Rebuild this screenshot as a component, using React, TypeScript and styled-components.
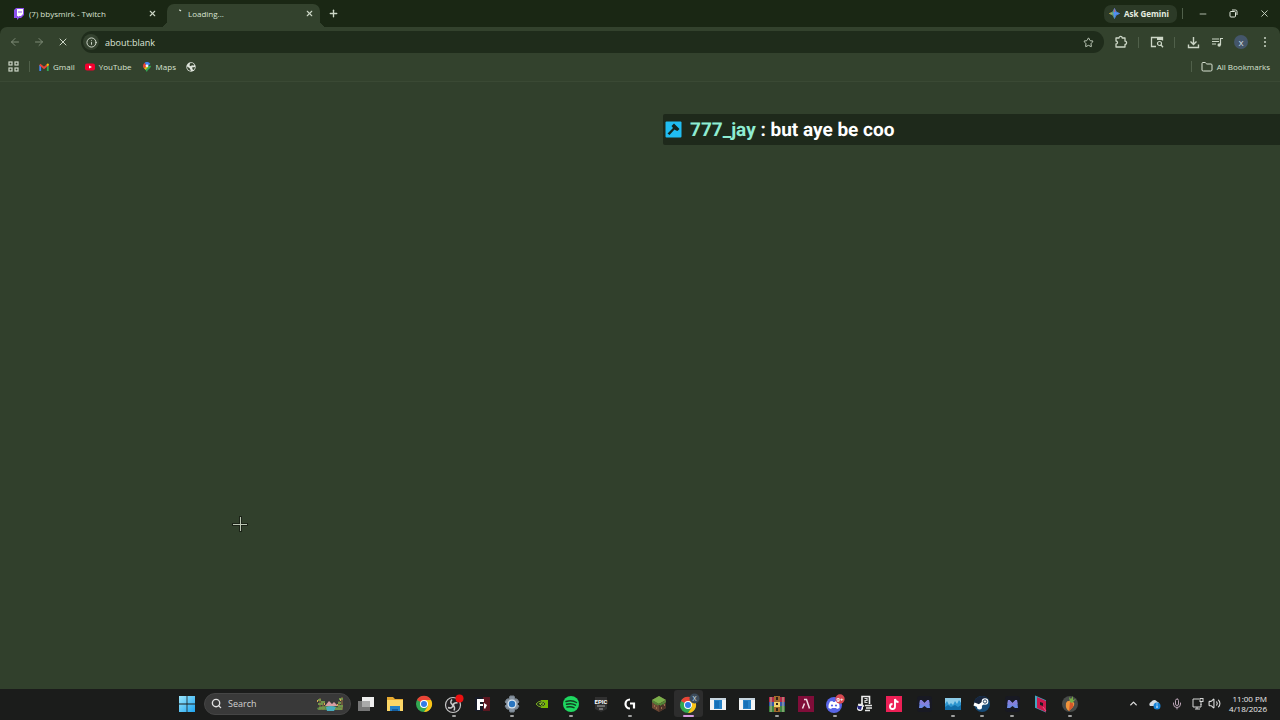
import React from "react";
import styled, { createGlobalStyle } from "styled-components";
import {
  ArrowLeft,
  ArrowRight,
  ChevronUp,
  Folder,
  Info,
  Mic,
  Minus,
  Plus,
  Search,
  Star,
  Volume2,
  X,
} from "lucide-react";

const ui = `"Open Sans", "Noto Sans", sans-serif`;
const c = {
  strip: "#1a2714",
  bar: "#33422d",
  page: "#31402c",
  field: "#1f2c1b",
  icon: "#ccd6c6",
  text: "#d9e2d3",
  dim: "#7e8b77",
  line: "#50604a",
  task: "#1b1c1b",
};

const Global = createGlobalStyle`
  * { box-sizing: border-box; }
  body { margin: 0; background: ${c.page}; font-family: ${ui}; font-size: 8px; color: ${c.text}; }
  button, input { font: inherit; color: inherit; border: 0; padding: 0; margin: 0; background: none; }
  svg { display: block; flex: none; }
  a { color: inherit; text-decoration: none; }
`;

const Screen = styled.div`
  display: flex;
  flex-direction: column;
  min-height: 100vh;
`;

const TabStrip = styled.header`
  display: flex;
  align-items: center;
  height: 27px;
  background: ${c.strip};
`;

const Tab = styled.div<{ $active?: boolean }>`
  position: relative;
  display: flex;
  align-items: center;
  align-self: stretch;
  gap: 4px;
  flex: 0 1 ${(p) => (p.$active ? 153 : 167)}px;
  margin-top: ${(p) => (p.$active ? 4 : 0)}px;
  padding: ${(p) => (p.$active ? "0 4px 4px 7px" : "0 8px 0 12px")};
  border-radius: 7px 7px 0 0;
  background: ${(p) => (p.$active ? c.bar : "transparent")};

  &::before,
  &::after {
    content: "";
    display: ${(p) => (p.$active ? "block" : "none")};
    position: absolute;
    bottom: 0;
    width: 7px;
    height: 7px;
  }
  &::before {
    right: 100%;
    background: radial-gradient(circle at 0 0, transparent 7px, ${c.bar} 7px);
  }
  &::after {
    left: 100%;
    background: radial-gradient(circle at 100% 0, transparent 7px, ${c.bar} 7px);
  }
`;

const TabTitle = styled.span`
  flex: 1;
  white-space: nowrap;
  overflow: hidden;
`;

const IconButton = styled.button<{ $w?: number; $dim?: boolean }>`
  display: flex;
  align-items: center;
  justify-content: center;
  flex: none;
  width: ${(p) => p.$w ?? 24}px;
  height: 24px;
  color: ${(p) => (p.$dim ? c.dim : c.icon)};
`;

const Spacer = styled.div`
  flex: 1;
`;

const Gemini = styled.button`
  display: flex;
  align-items: center;
  gap: 4px;
  height: 18px;
  padding: 0 8px 0 5px;
  border-radius: 7px;
  background: #2c3a27;
  font-weight: 700;
  color: #e6eee0;
`;

const Divider = styled.span<{ $gap?: number; $before?: number }>`
  flex: none;
  align-self: center;
  width: 1px;
  height: 11px;
  margin: 0 ${(p) => p.$gap ?? 6}px 0 ${(p) => p.$before ?? 5}px;
  background: ${c.line};
`;

const Toolbars = styled.div`
  background: ${c.strip};
`;

const Toolbar = styled.nav`
  display: flex;
  align-items: center;
  height: 30px;
  padding: 0 3px;
  border-radius: 7px 7px 0 0;
  background: ${c.bar};
`;

const Omnibox = styled.form`
  display: flex;
  align-items: center;
  flex: 1;
  gap: 6px;
  height: 22px;
  margin: 0 5px 0 6px;
  padding: 0 4px 0 2px;
  border-radius: 11px;
  background: ${c.field};
`;

const SiteInfo = styled.button`
  display: flex;
  align-items: center;
  justify-content: center;
  width: 16px;
  height: 16px;
  border-radius: 50%;
  background: #33412e;
  color: #dbe4d6;
`;

const Address = styled.input`
  flex: 1;
  min-width: 0;
  height: 20px;
  outline: none;
  font-size: 9px;
  color: #dfe7da;
`;

const Avatar = styled.span`
  display: flex;
  align-items: center;
  justify-content: center;
  width: 14px;
  height: 14px;
  border-radius: 50%;
  background: #44566a;
  color: #e4ecf4;
`;

const Bookmarks = styled.nav`
  display: flex;
  align-items: center;
  height: 25px;
  padding: 0 10px 5px 8px;
  background: ${c.bar};
  border-bottom: 1px solid #3a4934;
`;

const Bookmark = styled.a`
  display: flex;
  align-items: center;
  gap: 4px;
  margin-right: 10px;
  white-space: nowrap;

  &:last-child {
    margin-right: 0;
  }
`;

const Viewport = styled.main`
  position: relative;
  flex: 1;
  padding-top: 32px;
`;

const ChatLine = styled.div`
  display: flex;
  align-items: center;
  width: 617px;
  max-width: 100%;
  height: 31px;
  margin-left: auto;
  padding-left: 2px;
  border-radius: 2px 0 0 2px;
  background: #1e291b;
  font: 700 19px/30px Roboto, sans-serif;
  text-rendering: geometricPrecision;
  color: #fff;
  white-space: pre;
`;

const ChatName = styled.span`
  margin-left: 8px;
  color: #8eecd2;
`;

const Crosshair = styled.svg`
  position: absolute;
  left: 232px;
  top: 434px;
`;

const Taskbar = styled.footer`
  display: grid;
  grid-template-columns: minmax(0, 172fr) minmax(0, 913px) minmax(195px, 195fr);
  height: 31px;
  padding-bottom: 2px;
  background: ${c.task};
`;

const Apps = styled.div`
  grid-column: 2;
  display: flex;
  align-items: center;
`;

const SearchBox = styled.label`
  display: flex;
  align-items: center;
  gap: 6px;
  flex: none;
  width: 147px;
  height: 22px;
  margin-left: 2px;
  padding: 0 6px 0 6px;
  border: 1px solid #454545;
  border-radius: 11px;
  background: #393939;
  color: #e2e2e2;

  input {
    flex: 1;
    min-width: 0;
    font-size: 9px;
    outline: none;
  }
  input::placeholder {
    color: #d2d2d2;
    opacity: 1;
  }
`;

const AppButton = styled.button<{ $state?: "running" | "active" }>`
  position: relative;
  display: flex;
  align-items: center;
  justify-content: center;
  flex: 1;
  min-width: 0;
  height: 27px;
  border-radius: 3px;
  background: ${(p) => (p.$state === "active" ? "#2d2d2d" : "none")};

  &::after {
    content: "";
    display: ${(p) => (p.$state ? "block" : "none")};
    position: absolute;
    bottom: 0;
    width: ${(p) => (p.$state === "active" ? 11 : 4)}px;
    height: 2px;
    border-radius: 1px;
    background: ${(p) => (p.$state === "active" ? "#d59ae0" : "#a0a0a0")};
  }
`;

const Start = styled.button`
  display: flex;
  align-items: center;
  justify-content: center;
  flex: none;
  width: 30px;
  height: 27px;
`;

const Tray = styled.div`
  display: flex;
  align-items: center;
  justify-content: flex-end;
  padding-right: 13px;
  color: #dedede;
`;

const Clock = styled.time`
  width: 46px;
  line-height: 10px;
  text-align: right;
  color: #ececec;
  white-space: nowrap;
`;

const Svg = ({ s = 18, w, children }: { s?: number; w?: number; children: React.ReactNode }) => (
  <svg width={w ?? s} height={s} viewBox={`0 0 ${w ?? s} ${s}`} fill="none">
    {children}
  </svg>
);

const TwitchIcon = () => (
  <Svg s={13}>
    <path d="M4 1h8v7L9 11H7l-2 2v-2H2V3z" fill="#8d50ee" />
    <path d="M5 2h6v5L9 9H7L6 10V9H5z" fill="#fff" />
    <path d="M7 4v2M9 4v2" stroke="#8d50ee" />
  </Svg>
);

const GeminiIcon = () => (
  <Svg s={11}>
    <defs>
      <linearGradient id="gem" gradientUnits="userSpaceOnUse" x1="0" y1="6" x2="11" y2="5">
        <stop offset="0" stopColor="#f1bf45" />
        <stop offset=".35" stopColor="#5fa886" />
        <stop offset=".5" stopColor="#4f8df5" />
        <stop offset="1" stopColor="#5b94f8" />
      </linearGradient>
    </defs>
    <path d="M5.500 .5Q6.200 4.800 10.500 5.500Q6.200 6.200 5.500 10.500Q4.800 6.200 .5 5.500Q4.800 4.800 5.500 .5z" fill="url(#gem)" stroke="url(#gem)" strokeWidth=".8" />
    <path d="m5.500 .5-.6 3 .6.500.6-.5z" fill="#ea5545" />
  </Svg>
);

const PuzzleIcon = () => (
  <Svg s={14}>
    <path d="M2 3h3a1.600 1.600 0 0 1 3.200 0H11v3.200a1.600 1.600 0 0 1 0 3.200V12H2V9a1.500 1.500 0 0 0 0-3z" stroke={c.icon} strokeWidth="1.300" strokeLinejoin="round" />
  </Svg>
);

const LensIcon = () => (
  <Svg s={14}>
    <path d="M6 11.500H1.500v-9h11v3" stroke={c.icon} strokeWidth="1.300" />
    <path d="M7 3h5v2H7z" fill={c.icon} />
    <circle cx="9.500" cy="8.500" r="2" stroke={c.icon} strokeWidth="1.200" />
    <path d="m11 10 2 2.200" stroke={c.icon} strokeWidth="1.300" />
  </Svg>
);

const DownloadIcon = () => (
  <Svg s={13}>
    <path d="M6.500 1v7M3.500 5.500l3 3 3-3M1.500 8.500v3h10v-3" stroke={c.icon} strokeWidth="1.400" />
  </Svg>
);

const MediaIcon = () => (
  <Svg s={13}>
    <path d="M1 3h7M1 5.500h7M1 8h4M9.500 9V2.500H12" stroke={c.icon} strokeWidth="1.200" />
    <circle cx="8.200" cy="9" r="1.700" fill={c.icon} />
  </Svg>
);

const DotsIcon = () => (
  <Svg s={12}>
    {[2, 6, 10].map((y) => (
      <circle key={y} cx="6" cy={y} r="1" fill={c.icon} />
    ))}
  </Svg>
);

const RestoreIcon = () => (
  <Svg s={9}>
    <rect x="1" y="2.500" width="5.500" height="5.500" rx="1" stroke="#e0e8dc" />
    <path d="M3 1h3.500q1.500 0 1.500 1.500V6" stroke="#e0e8dc" />
  </Svg>
);

const GridIcon = () => (
  <Svg s={11}>
    {[1, 7].map((x) => [1, 7].map((y) => <rect key={`${x}${y}`} x={x} y={y} width="3" height="3" stroke={c.icon} strokeWidth="1.200" />))}
  </Svg>
);

const GmailIcon = () => (
  <Svg s={10}>
    <path d="M1.200 9V3" stroke="#4285f4" strokeWidth="1.800" />
    <path d="M8.800 9V3" stroke="#34a853" strokeWidth="1.800" />
    <path d="M.8 2.500 5 6l4.200-3.500" stroke="#ea4335" strokeWidth="2" />
    <path d="M8 3.500 9.500 2" stroke="#fbbc04" strokeWidth="1.800" />
  </Svg>
);

const YouTubeIcon = () => (
  <Svg s={10}>
    <rect y="1.500" width="10" height="7" rx="2" fill="#f4002f" />
    <path d="m4 3.500 3 1.500-3 1.500z" fill="#fff" />
  </Svg>
);

const MapsIcon = () => (
  <Svg s={10}>
    <path d="M5 10C4.500 7.500 1 6.500 1 3.800L5 4z" fill="#34a853" />
    <path d="M5 10c.5-2.500 4-3.500 4-6.200L5 4 2.500 6.500z" fill="#34a853" />
    <path d="M1 4A4 4 0 0 1 2.600.7L5 4 2.200 6.600Q1 5 1 4z" fill="#ea4335" />
    <path d="M2.600.7A4 4 0 0 1 8.400 2L5 4z" fill="#4285f4" />
    <path d="M2.200 6.600 5 4l1 1-2.600 2.800z" fill="#fbbc04" />
    <circle cx="5" cy="3.800" r="1.400" fill="#f3f3f3" />
  </Svg>
);

const GlobeIcon = () => (
  <Svg s={10}>
    <circle cx="5" cy="5" r="4.700" fill="#dfe5dc" />
    <path d="M1 4.500 3.500 6 5 8.800 3 8.500Q1 7 1 4.500zM4 1.200 6.500 1l2 2-1.500.8L6 3 5 4.200 3.500 3.500zM6 5.500l3-.5-.8 2.500L7 8z" fill="#34422e" />
  </Svg>
);

const GavelIcon = () => (
  <Svg s={17}>
    <rect x=".5" y=".5" width="16" height="16" rx="1" fill="#20bdf2" />
    <path d="M9 2.500 14.500 8 12.500 10 11 9.500 9.500 8.500 4.500 14 2.500 12.500 8 7 6.500 5z" fill="#14251f" />
  </Svg>
);

const StartIcon = () => (
  <Svg s={16}>
    <defs>
      <linearGradient id="win" gradientUnits="userSpaceOnUse" x1="0" y1="0" x2="16" y2="16">
        <stop stopColor="#9ce7fd" />
        <stop offset="1" stopColor="#1ea4f0" />
      </linearGradient>
    </defs>
    <path d="M0 0h7.600v7.600H0zM8.400 0H16v7.600H8.400zM0 8.400h7.600V16H0zM8.400 8.400H16V16H8.400z" fill="url(#win)" />
  </Svg>
);

const LandscapeIcon = () => (
  <Svg s={16} w={28}>
    <path d="M1 12Q7 9 14 10t13 1l-1 3H2z" fill="#5b8747" />
    <path d="M10 11q5-2 10 0l-2 4h-7z" fill="#48acbd" />
    <path d="m9 10 4-5 3 3 2-2 4 4z" fill="#d79da3" />
    <path d="M4 14V2M7 14V5M23 14V5M26 14V1" stroke="#9c7443" />
    <path d="M2 4h3M2 8h5M5 6h4M22 7h3M23 3h4M22 10h5M3 12h6M19 13h7" stroke="#72944a" strokeWidth="2" />
    <path d="M1 5h1M8 8h1M21 9h1M24 4h1" stroke="#dba952" strokeWidth="2" />
  </Svg>
);

const TaskViewIcon = () => (
  <Svg>
    <rect x="5" y="2" width="12" height="10" fill="#eee" />
    <rect x="1" y="6" width="12" height="10" fill="#777" />
    <path d="M5 6h8v6H5z" fill="#aaa" />
  </Svg>
);

const ExplorerIcon = () => (
  <Svg>
    <path d="M1 2h6l2 2h8v12H1z" fill="#e6aa31" />
    <path d="M1 5h16v11H1z" fill="#fcd767" />
    <path d="M4 11h10v5H4z" fill="#2682c6" />
    <path d="M6 14h6v2H6z" fill="#155d9e" />
  </Svg>
);

const ChromeMark = () => (
  <>
    <circle cx="9" cy="9" r="8" fill="#32a852" />
    <path d="M9 9 2 5A8 8 0 0 1 16 5z" fill="#e94436" />
    <path d="M9 5h7A8 8 0 0 1 9 17l4-6z" fill="#fbc217" />
    <circle cx="9" cy="9" r="4" fill="#fff" />
    <circle cx="9" cy="9" r="3" fill="#327ce7" />
  </>
);

const ChromeIcon = () => (
  <Svg>
    <ChromeMark />
  </Svg>
);

const ChromeProfileIcon = () => (
  <Svg s={22}>
    <g transform="translate(1 3)">
      <ChromeMark />
    </g>
    <circle cx="16.500" cy="5.500" r="5" fill="#3c4b5b" />
    <text x="16.500" y="8" textAnchor="middle" fontSize="7" fill="#dde8f2">X</text>
  </Svg>
);

const ObsIcon = () => (
  <Svg s={20}>
    <circle cx="9" cy="11" r="7.500" fill="#232123" stroke="#c4c4c4" strokeWidth="1.200" />
    <path d="M8 5.500q-2.500 3 .2 5M13.500 9q-4-.8-4.500 2.500M4 13.500q4 1.500 5-2M9 11q2.500 2.500 1 5.500" stroke="#c9c9c9" strokeWidth="1.500" />
    <circle cx="9" cy="11" r="1.300" fill="#c9c9c9" />
    <circle cx="15.500" cy="4.500" r="4" fill="#ed1010" />
  </Svg>
);

const FIcon = () => (
  <Svg>
    <path d="M1 2h9v14H1z" fill="#171b27" />
    <path d="M9 2h7v14H9z" fill="#5b1720" />
    <path d="M3 4h7v3H6v2h3v2H6v4H3zM10 8l3 2-2 4-1-1z" fill="#fff" />
  </Svg>
);

const SettingsIcon = () => (
  <Svg>
    <path d="m7 1-1 3-2 0-2 3 2 2-2 2 2 3h2l1 3h4l1-3h2l2-3-2-2 2-2-2-3h-2l-1-3z" fill="#8793a0" stroke="#78838e" strokeLinejoin="round" />
    <circle cx="9" cy="9" r="4.500" fill="#d9e5ef" />
    <circle cx="9" cy="9" r="3.200" fill="#2874bf" />
  </Svg>
);

const NvidiaIcon = () => (
  <Svg>
    <path d="M8 5h7v8H8z" fill="#78b900" />
    <path d="M3 9q5-6 10 0-5 6-10 0z" fill="#25311b" stroke="#78a923" />
    <path d="M6 9q3-3 5 0-3 3-4 0l2-1" stroke="#8ecb21" />
  </Svg>
);

const SpotifyIcon = () => (
  <Svg>
    <circle cx="9" cy="9" r="8" fill="#1ed760" />
    <path d="M4 6.500q6-2 10.500 1M4.500 9.300q5-1.600 9 .8M5 12q4-1 7 .7" stroke="#123d20" strokeWidth="1.500" strokeLinecap="round" />
  </Svg>
);

const EpicIcon = () => (
  <Svg>
    <path d="M3 2h12v12l-6 3-6-3z" fill="#303030" />
    <text x="9" y="9" textAnchor="middle" fontFamily="Roboto" fontSize="6" fontWeight="700" fill="#fff">EPIC</text>
    <path d="M5 11h8M7 14h4" stroke="#aaa" />
  </Svg>
);

const LogitechIcon = () => (
  <Svg>
    <path d="M9 4.500a4.500 4.500 0 1 0 0 9M9 8.500h4v5" stroke="#fff" strokeWidth="2.200" />
  </Svg>
);

const GrassBlockIcon = () => (
  <Svg>
    <path d="m9 1 7 4v8l-7 4-7-4V5z" fill="#6c4734" />
    <path d="m9 1 7 4-7 4-7-4z" fill="#79af4b" />
    <path d="m9 9 7-4v8l-7 4z" fill="#4d3329" />
    <path d="m2 5 7 4 7-4v2l-3 3v-1l-3 2v-1H8v1L6 9v1L2 7z" fill="#548438" />
    <path d="M4 10h1v2H4zM6 12h1v2H6zM11 12h1v2h-1zM14 9h1v2h-1z" fill="#9b6b4c" />
  </Svg>
);

const WindowIcon = () => (
  <Svg>
    <path d="M1 3h16v12H1z" fill="#f4f4f4" />
    <path d="M1 3h16v2H1z" fill="#c7d5df" />
    <path d="M5 5h8v9H5z" fill="#2883c7" />
    <path d="M6 6h4v7H6z" fill="#1770b7" />
  </Svg>
);

const WinrarIcon = () => (
  <Svg>
    <path d="M1 2h16v5H1z" fill="#b52949" />
    <path d="M1 7h16v4H1z" fill="#3658a9" />
    <path d="M1 11h16v6H1z" fill="#3e8540" />
    <path d="M6 1h6v16H6z" fill="#a26a2d" />
    <path d="M6 7h6v5H6z" fill="#f1d16b" />
    <path d="M3 2v15M15 2v15" stroke="#c3bd9b" />
    <path d="M8 9h2M9 2v3M9 13v3" stroke="#312317" strokeWidth="2" />
  </Svg>
);

const RedAIcon = () => (
  <Svg>
    <path d="M1 1h16v16H1z" fill="#800d39" />
    <path d="M7 4.500h2.500l3 9M7.500 8.500 5.500 13.500" stroke="#f1dbe3" strokeWidth="1.500" />
  </Svg>
);

const DiscordIcon = () => (
  <Svg s={20}>
    <circle cx="9" cy="11" r="8" fill="#5865e8" />
    <path d="M5 7.500 7.500 7l.5 1h2l.5-1 2.500.5Q15 11 14.500 14L12 15l-1-1H7l-1 1-2.500-1Q3 11 5 7.500z" fill="#fff" />
    <circle cx="7" cy="11.500" r="1.100" fill="#5865e8" />
    <circle cx="11" cy="11.500" r="1.100" fill="#5865e8" />
    <circle cx="15" cy="5" r="4.700" fill="#d94951" />
    <text x="15" y="7.500" textAnchor="middle" fontSize="6" fontWeight="700" fill="#fff">9+</text>
  </Svg>
);

const MusicAppIcon = () => (
  <Svg>
    <path d="M6 9V1.500h7.500V9" stroke="#f0f0f0" strokeWidth="1.600" />
    <path d="M8.500 3.500h2.500v2H9v2h2.500" stroke="#d5d5d5" strokeWidth="1.200" />
    <path d="M2 9.500h4l2 2M9 10.500h7M10 13h6M9 15.500h5" stroke="#e4e4e4" strokeWidth="1.300" />
    <path d="M6 8v6" stroke="#e4e4e4" strokeWidth="1.600" />
    <circle cx="4" cy="13" r="3" fill="#fff" />
    <path d="m1 11 5 0-1 4-3-1z" fill="#292a84" />
  </Svg>
);

const TikTokIcon = () => (
  <Svg>
    <path d="M1 1h16v16H1z" fill="#ed2056" />
    <path d="M10 4v7.500a2.500 2.500 0 1 1-2.500-2.500M10 4q.5 3 3.500 3" stroke="#fff" strokeWidth="1.900" />
  </Svg>
);

const MedalIcon = () => (
  <Svg>
    <rect x="2" y="1" width="15" height="16" rx="3" fill="#181923" />
    <path d="M5 5h1.500l3 3 3-3H14l1 8h-3l-2.500-2L7 13H4z" fill="#6d8ae6" />
    <path d="M5 5h1.500l3 3 3-3H14l.5 4-5 1.500L4.500 9z" fill="#8580dc" />
  </Svg>
);

const WavesIcon = () => (
  <Svg>
    <path d="M1 3h16v12H1z" fill="#8ccbe8" />
    <path d="m1 9 2-3 2 4 2-2 2 2 2-4 2 3 2-4 2 3v7H1z" fill="#2d95cf" />
    <path d="m1 12 3-2 3 2 4-2 3 2 3-2v5H1z" fill="#126da8" />
  </Svg>
);

const SteamIcon = () => (
  <Svg>
    <circle cx="9" cy="9" r="8" fill="#164b78" />
    <path d="M1 8a8 8 0 0 1 14-4l-4 4-3 4-7-2z" fill="#18253c" />
    <path d="m1 9 5 2 4-3" stroke="#fff" strokeWidth="3" />
    <circle cx="12" cy="6.500" r="3.300" fill="#fff" />
    <circle cx="12" cy="6.500" r="1.700" stroke="#244261" />
    <circle cx="6.500" cy="12" r="2.500" fill="#fff" />
  </Svg>
);

const HexIcon = () => (
  <Svg>
    <path d="m4 2 9 4v10l-9-4z" stroke="#41a6c2" strokeWidth="2" />
    <path d="m5 2 9 4v11l-9-4z" fill="#cb194d" />
    <path d="m8 7 3 1v3l-3-1z" fill="#1e1b23" />
    <path d="m11 12 3 4" stroke="#ec5484" />
  </Svg>
);

const FlStudioIcon = () => (
  <Svg>
    <circle cx="9" cy="9" r="8" fill="#484b49" />
    <path d="M5 8q1-3 6-2 4 2 1 6l-4 4q-4-2-3-8z" fill="#ef943c" />
    <path d="M9 7q4 0 3 5l-4 4z" fill="#d5572b" />
    <path d="m9 7-1-5 2 2 2-3v4l3-1-4 4z" fill="#75ac46" />
  </Svg>
);

const OneDriveIcon = () => (
  <Svg s={14}>
    <path d="M2 9a2.500 2.500 0 0 1 1-4q3-3.500 6-.5 3 1 2.500 4.500z" fill="#d6dce2" />
    <circle cx="9" cy="9" r="3.500" fill="#1683d8" />
    <path d="M9 8.500V11M9 6.500v1" stroke="#fff" />
  </Svg>
);

const NetworkIcon = () => (
  <Svg s={14}>
    <path d="M8 2H2v8h8V7M4 12h5M6 10v2M10 5v3" stroke="#d6d6d6" />
    <rect x="9" y="1.500" width="3" height="3" stroke="#d6d6d6" />
  </Svg>
);

const TrayItem = styled.button<{ $w: number }>`
  display: flex;
  align-items: center;
  justify-content: center;
  flex: none;
  width: ${(p) => p.$w}px;
  height: 24px;
`;

type App = { name: string; icon: React.ComponentType; state?: "running" | "active" };

const apps: App[] = [
  { name: "Task view", icon: TaskViewIcon },
  { name: "File Explorer", icon: ExplorerIcon },
  { name: "Chrome", icon: ChromeIcon },
  { name: "OBS Studio", icon: ObsIcon, state: "running" },
  { name: "F", icon: FIcon },
  { name: "Settings", icon: SettingsIcon, state: "running" },
  { name: "NVIDIA", icon: NvidiaIcon },
  { name: "Spotify", icon: SpotifyIcon, state: "running" },
  { name: "Epic Games", icon: EpicIcon },
  { name: "Logitech G HUB", icon: LogitechIcon, state: "running" },
  { name: "Minecraft", icon: GrassBlockIcon },
  { name: "Chrome, profile X", icon: ChromeProfileIcon, state: "active" },
  { name: "Application", icon: WindowIcon },
  { name: "Application 2", icon: WindowIcon },
  { name: "WinRAR", icon: WinrarIcon, state: "running" },
  { name: "A", icon: RedAIcon },
  { name: "Discord", icon: DiscordIcon, state: "running" },
  { name: "Music", icon: MusicAppIcon },
  { name: "TikTok", icon: TikTokIcon },
  { name: "Medal", icon: MedalIcon },
  { name: "Monitor", icon: WavesIcon, state: "running" },
  { name: "Steam", icon: SteamIcon, state: "running" },
  { name: "Medal, recording", icon: MedalIcon, state: "running" },
  { name: "Launcher", icon: HexIcon },
  { name: "FL Studio", icon: FlStudioIcon, state: "running" },
];

export default function App() {
  return (
    <Screen>
      <Global />
      <TabStrip>
        <Tab>
          <TwitchIcon />
          <TabTitle>(7) bbysmirk - Twitch</TabTitle>
          <IconButton $w={14} aria-label="Close tab">
            <X size={9} strokeWidth={3} />
          </IconButton>
        </Tab>
        <Tab $active>
          <Svg s={10}>
            <path d="M5 1q1 0 2 1" stroke="#dce5d7" strokeWidth="1.200" />
          </Svg>
          <TabTitle>Loading...</TabTitle>
          <IconButton $w={14} aria-label="Close tab">
            <X size={9} strokeWidth={3} />
          </IconButton>
        </Tab>
        <IconButton $w={26} aria-label="New tab">
          <Plus size={11} strokeWidth={3} />
        </IconButton>
        <Spacer />
        <Gemini>
          <GeminiIcon />
          Ask Gemini
        </Gemini>
        <Divider $gap={4} />
        <IconButton $w={31} aria-label="Minimize">
          <Minus size={10} strokeWidth={2} />
        </IconButton>
        <IconButton $w={31} aria-label="Restore">
          <RestoreIcon />
        </IconButton>
        <IconButton $w={31} aria-label="Close window">
          <X size={11} strokeWidth={2} />
        </IconButton>
      </TabStrip>

      <Toolbars>
        <Toolbar>
          <IconButton $dim aria-label="Back">
            <ArrowLeft size={12} strokeWidth={2} />
          </IconButton>
          <IconButton $dim aria-label="Forward">
            <ArrowRight size={12} strokeWidth={2} />
          </IconButton>
          <IconButton aria-label="Stop loading">
            <X size={12} strokeWidth={2} />
          </IconButton>
          <Omnibox onSubmit={(e) => e.preventDefault()}>
            <SiteInfo type="button" aria-label="Site information">
              <Info size={11} strokeWidth={2} />
            </SiteInfo>
            <Address aria-label="Address" defaultValue="about:blank" />
            <IconButton type="button" aria-label="Bookmark this tab">
              <Star size={11} strokeWidth={2} />
            </IconButton>
          </Omnibox>
          <IconButton aria-label="Extensions">
            <PuzzleIcon />
          </IconButton>
          <Divider />
          <IconButton aria-label="Search this page">
            <LensIcon />
          </IconButton>
          <Divider />
          <IconButton aria-label="Downloads">
            <DownloadIcon />
          </IconButton>
          <IconButton aria-label="Media">
            <MediaIcon />
          </IconButton>
          <IconButton aria-label="Profile">
            <Avatar>X</Avatar>
          </IconButton>
          <IconButton aria-label="Menu">
            <DotsIcon />
          </IconButton>
        </Toolbar>
        <Bookmarks>
          <GridIcon />
          <Divider $before={10} $gap={9} />
          <Bookmark href="#gmail">
            <GmailIcon />
            Gmail
          </Bookmark>
          <Bookmark href="#youtube">
            <YouTubeIcon />
            YouTube
          </Bookmark>
          <Bookmark href="#maps">
            <MapsIcon />
            Maps
          </Bookmark>
          <Bookmark href="#site" aria-label="Site">
            <GlobeIcon />
          </Bookmark>
          <Spacer />
          <Divider $gap={9} />
          <Bookmark href="#all">
            <Folder size={12} strokeWidth={2} />
            All Bookmarks
          </Bookmark>
        </Bookmarks>
      </Toolbars>

      <Viewport>
        <ChatLine>
          <GavelIcon />
          <ChatName>777_jay</ChatName> : but aye be coo
        </ChatLine>
        <Crosshair width="16" height="16" viewBox="0 0 16 16">
          <path d="M8.500 0v16M0 8.500h16" stroke="#1c2418" strokeWidth="3" />
          <path d="M8.500 1v14M1 8.500h14" stroke="#bcc7b5" />
        </Crosshair>
      </Viewport>

      <Taskbar>
        <Apps>
          <Start aria-label="Start">
            <StartIcon />
          </Start>
          <SearchBox>
            <Search size={11} strokeWidth={3} />
            <input type="text" placeholder="Search" aria-label="Search" />
            <LandscapeIcon />
          </SearchBox>
          {apps.map(({ name, icon: Icon, state }) => (
            <AppButton key={name} aria-label={name} $state={state}>
              <Icon />
            </AppButton>
          ))}
        </Apps>
        <Tray>
          <TrayItem $w={22} aria-label="Show hidden icons">
            <ChevronUp size={11} strokeWidth={3} />
          </TrayItem>
          <TrayItem $w={22} aria-label="OneDrive">
            <OneDriveIcon />
          </TrayItem>
          <TrayItem $w={22} aria-label="Microphone">
            <Mic size={12} strokeWidth={2} color="#b9a3b4" />
          </TrayItem>
          <TrayItem $w={19} aria-label="Network">
            <NetworkIcon />
          </TrayItem>
          <TrayItem $w={14} aria-label="Volume">
            <Volume2 size={13} strokeWidth={2} />
          </TrayItem>
          <Clock dateTime="2026-04-18T23:00">
            11:00 PM
            <br />
            4/18/2026
          </Clock>
        </Tray>
      </Taskbar>
    </Screen>
  );
}
